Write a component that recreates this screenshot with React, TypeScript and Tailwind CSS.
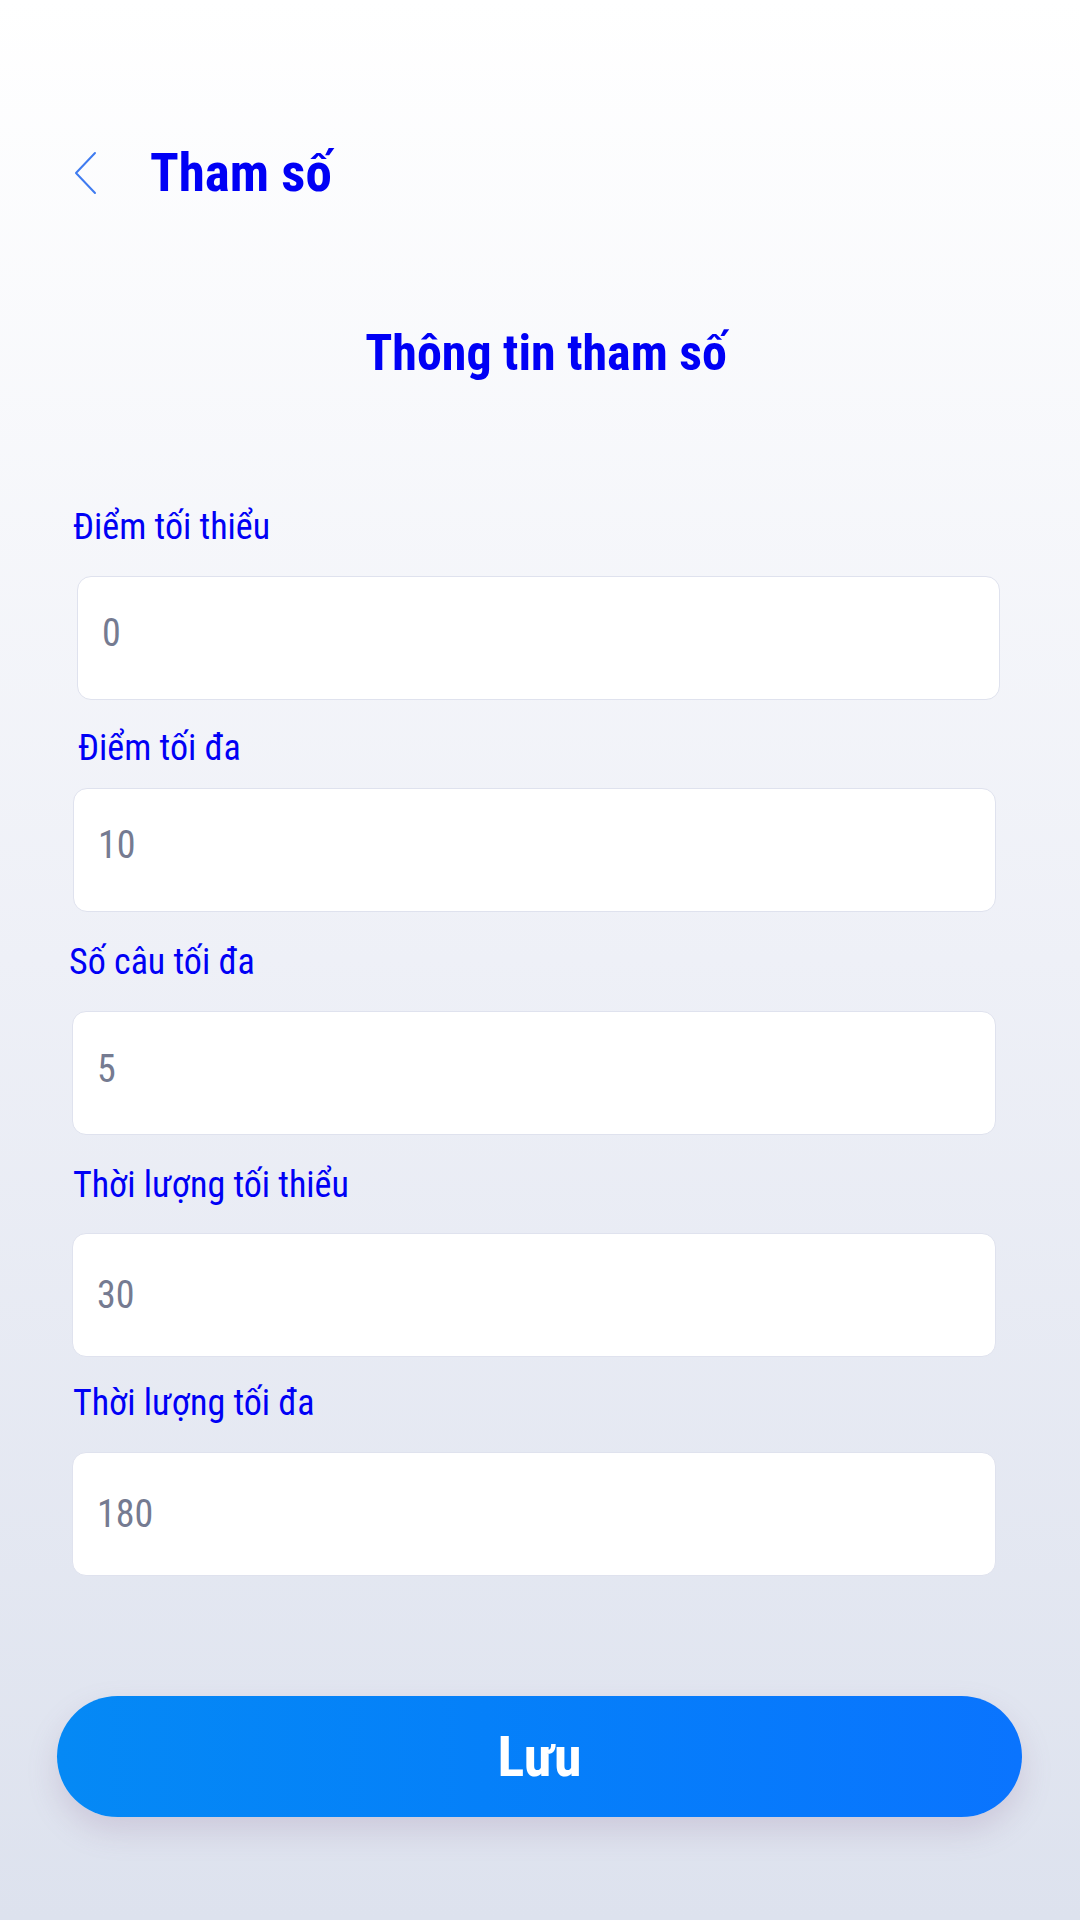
import React, { useState } from "react";

type Field = {
  key: string;
  label: string;
  value: string;
  labelClass: string;
  inputClass: string;
};

// spacing differs a little from row to row in the design, kept per field
const fields: Field[] = [
  { key: "minScore", label: "Điểm tối thiểu", value: "0", labelClass: "mt-0 pl-[1px]", inputClass: "mt-[29px] ml-[5px] -mr-[4px] pb-[10px]" },
  { key: "maxScore", label: "Điểm tối đa", value: "10", labelClass: "mt-[28px] pl-[6px]", inputClass: "mt-[20px] ml-[1px] pb-[10px]" },
  { key: "maxQuestions", label: "Số câu tối đa", value: "5", labelClass: "mt-[30px] -ml-[3px]", inputClass: "mt-[29px] ml-0 pb-[8px]" },
  { key: "minDuration", label: "Thời lượng tối thiểu", value: "30", labelClass: "mt-[30px] pl-[1px]", inputClass: "mt-[28px] ml-0 pb-0" },
  { key: "maxDuration", label: "Thời lượng tối đa", value: "180", labelClass: "mt-[26px] pl-[1px]", inputClass: "mt-[29px] ml-0 pb-0" },
];

function BackIcon() {
  return (
    <svg width="24" height="44" viewBox="0 0 24 44" fill="none">
      <polyline
        points="21,2 2,22 21,42"
        stroke="#3f7bf0"
        strokeWidth="2"
        strokeLinecap="round"
        strokeLinejoin="round"
      />
    </svg>
  );
}

export default function App() {
  const [values, setValues] = useState<Record<string, string>>(() =>
    Object.fromEntries(fields.map((f) => [f.key, f.value])),
  );

  return (
    <div className="min-h-[1920px] w-full bg-gradient-to-b from-white via-[#eef0f7] to-[#dde2ee] font-['Roboto_Condensed','Roboto',sans-serif] font-stretch-condensed">
      {/* header */}
      <div className="flex items-center pt-[146px] pl-[74px]">
        <button className="flex h-[54px] items-center">
          <BackIcon />
        </button>
        <h1 className="ml-[52px] text-[53px] leading-none font-bold text-[#0000f5]">
          Tham số
        </h1>
      </div>

      <h2 className="mt-[128px] pl-[12px] text-center text-[50px] leading-none font-bold text-[#0000f5]">
        Thông tin tham số
      </h2>

      <div className="mt-[129px] flex flex-col pl-[72px] pr-[84px]">
        {fields.map((f) => (
          <div key={f.key} className="flex flex-col">
            <label
              className={`h-[40px] text-[36px] leading-[40px] text-[#0000f5] ${f.labelClass}`}
            >
              {f.label}
            </label>
            <input
              value={values[f.key]}
              onChange={(e) =>
                setValues((v) => ({ ...v, [f.key]: e.target.value }))
              }
              className={`h-[124px] rounded-[14px] border border-[#dfe2ee] bg-white px-[24px] text-[38px] text-[#757b91] outline-none ${f.inputClass}`}
            />
          </div>
        ))}
      </div>

      <div className="mt-[120px] pl-[57px] pr-[58px]">
        <button className="h-[121px] w-full rounded-full bg-gradient-to-r from-[#0589f5] to-[#0a74fe] text-[56px] font-bold text-white shadow-[0_14px_30px_rgba(140,110,150,0.22)]">
          Lưu
        </button>
      </div>
    </div>
  );
}
